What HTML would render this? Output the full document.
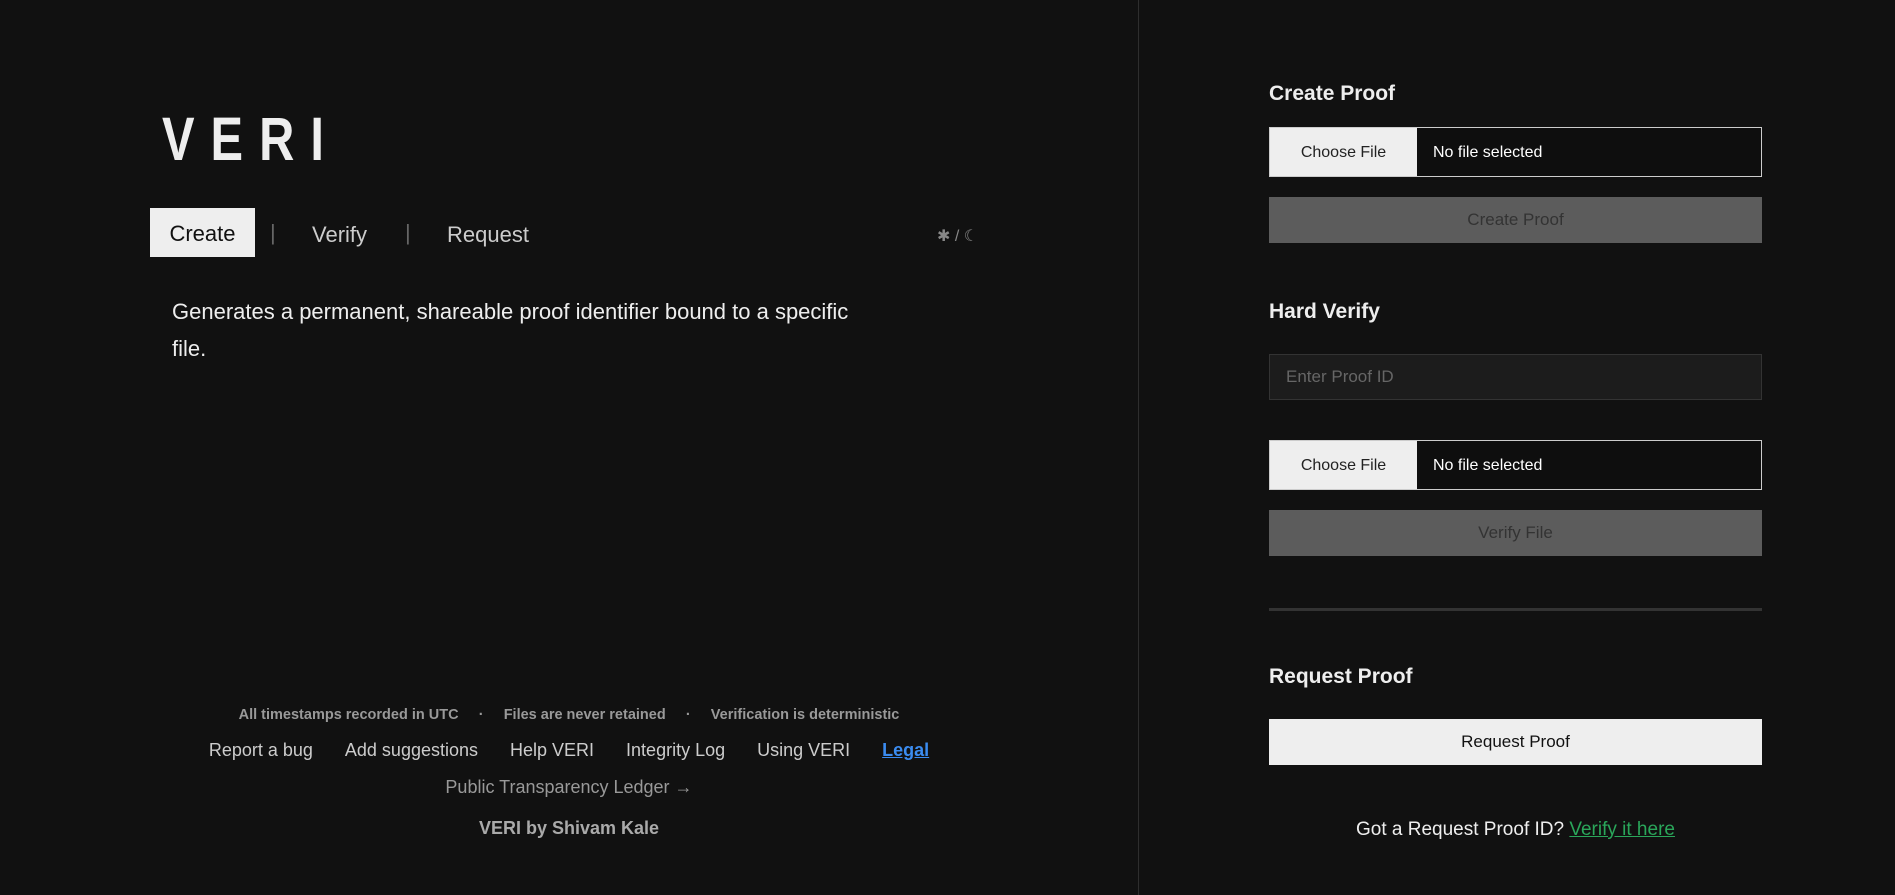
<!DOCTYPE html>
<html><head><meta charset="utf-8"><style>
*{box-sizing:border-box;margin:0;padding:0}
body{width:1895px;height:895px;background:#111;color:#eee;font-family:"Liberation Sans",sans-serif;position:relative;overflow:hidden}
.a{position:absolute;white-space:nowrap}
.div{position:absolute;left:1138px;top:0;width:1px;height:895px;background:#2e2e2e}
.logo{left:162px;top:104px;font-size:61px;font-weight:bold;letter-spacing:20px;color:#eee;transform:scaleX(0.8);transform-origin:left top}
.tab{font-size:22px;color:#ccc;top:222px}
.create{left:150px;top:208px;width:105px;height:49px;background:#eee;color:#111;font-size:22px;line-height:51px;text-align:center}
.sep{color:#666;font-size:22px;top:220px}
.desc{left:172px;top:293px;font-size:22px;line-height:37px;color:#eee;width:700px;white-space:normal}
.foot{left:0;width:1138px;text-align:center}
.h{font-size:21px;font-weight:bold;color:#eee;left:1269px}
.file{left:1269px;width:493px;height:50px;border:1px solid #ccc;background:#0e0e0e}
.file .b{position:absolute;left:0;top:0;width:147px;height:48px;background:#eee;color:#222;font-size:16px;line-height:50px;text-align:center}
.file .t{position:absolute;left:163px;top:0;line-height:50px;font-size:16px;color:#fff}
.btn{left:1269px;width:493px;height:46px;text-align:center;line-height:46px;font-size:17px}
</style></head><body>
<div class="div"></div>
<div class="a logo">VERI</div>
<div class="a create">Create</div>
<div class="a sep" style="left:270px">|</div>
<div class="a tab" style="left:312px">Verify</div>
<div class="a sep" style="left:405px">|</div>
<div class="a tab" style="left:447px">Request</div>
<div class="a" style="left:937px;top:226px;font-size:16px;color:#888">✱ / ☾</div>
<div class="a desc">Generates a permanent, shareable proof identifier bound to a specific file.</div>

<div class="a foot" style="top:707px;font-size:14.5px;font-weight:bold;color:#999">All timestamps recorded in UTC &nbsp; &nbsp; · &nbsp; &nbsp; Files are never retained &nbsp; &nbsp; · &nbsp; &nbsp; Verification is deterministic</div>
<div class="a foot" style="top:740px;font-size:18px;color:#ccc"><span style="margin:0 16px">Report a bug</span><span style="margin:0 16px">Add suggestions</span><span style="margin:0 16px">Help VERI</span><span style="margin:0 16px">Integrity Log</span><span style="margin:0 16px">Using VERI</span><span style="margin:0 16px;color:#3b8cf0;text-decoration:underline;font-weight:bold">Legal</span></div>
<div class="a foot" style="top:777px;font-size:18px;color:#999">Public Transparency Ledger →</div>
<div class="a foot" style="top:818px;font-size:18px;font-weight:bold;color:#aaa">VERI by Shivam Kale</div>

<div class="a h" style="top:82px">Create Proof</div>
<div class="a file" style="top:127px"><div class="b">Choose File</div><div class="t">No file selected</div></div>
<div class="a btn" style="top:197px;background:#5c5c5c;color:#333">Create Proof</div>
<div class="a h" style="top:300px">Hard Verify</div>
<div class="a" style="left:1269px;top:354px;width:493px;height:46px;background:#1c1c1c;border:1px solid #333;color:#666;font-size:17px;line-height:44px;padding-left:16px">Enter Proof ID</div>
<div class="a file" style="top:440px"><div class="b">Choose File</div><div class="t">No file selected</div></div>
<div class="a btn" style="top:510px;background:#5c5c5c;color:#333">Verify File</div>
<div class="a" style="left:1269px;top:608px;width:493px;height:3px;background:#333"></div>
<div class="a h" style="top:665px">Request Proof</div>
<div class="a btn" style="top:719px;background:#eee;color:#111">Request Proof</div>
<div class="a" style="left:1269px;width:493px;top:819px;text-align:center;font-size:19px;color:#eee">Got a Request Proof ID? <span style="color:#2aa65a;text-decoration:underline">Verify it here</span></div>
</body></html>
